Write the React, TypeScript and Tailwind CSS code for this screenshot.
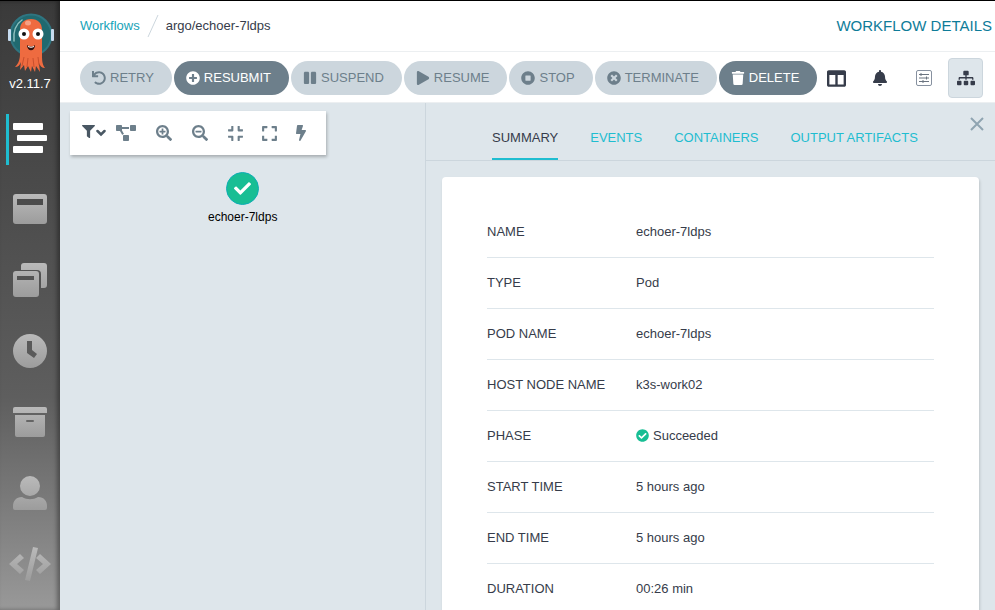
import type { ReactNode } from "react";
import {
  FaUndo, FaPlusCircle, FaPause, FaPlay, FaStopCircle, FaTimesCircle, FaTrash, FaColumns, FaBell, FaSitemap,
  FaFilter, FaProjectDiagram, FaSearchPlus, FaSearchMinus, FaCompress, FaExpand, FaBolt, FaCheck, FaCheckCircle,
} from "react-icons/fa";

function Logo() {
  return (
    <svg viewBox="0 0 48 64" className="h-16 w-12" aria-hidden="true">
      <circle cx="25" cy="24" r="21" fill="#20696f" />
      <circle cx="25" cy="24" r="20.500" fill="none" stroke="#2f7581" strokeWidth="2" />
      <path d="M8 30C7 20 10 13 16 9" fill="none" stroke="#8fc0bf" strokeWidth="1.500" strokeLinecap="round" />
      <rect x="2" y="18" width="3" height="12" rx="1" fill="#c7dcf0" />
      <rect x="45" y="18" width="3" height="12" rx="1" fill="#c7dcf0" />
      <path d="M14 19c0-7 4-11 11-11s11 4 11 11v23c0 7 0 11 3 15-3 0-5-2-6-5l1 9-4-6-1 6-3-6-1 6-3-6-3 5-1-6-4 5 1-8c-1 3-3 5-6 5 4-4 5-8 5-14z" fill="#ee6b40" />
      <path d="M18 46l-2 9M22 47l-1 9M27 47l1 9M32 46l1 8" stroke="#c94f2d" strokeWidth="1" />
      <ellipse cx="22" cy="12" rx="3" ry="2.500" fill="#f7a184" />
      <circle cx="18" cy="23" r="5.500" fill="#fff" />
      <circle cx="32" cy="23" r="5.500" fill="#fff" />
      <circle cx="18" cy="23" r="2" fill="#111" />
      <circle cx="32" cy="23" r="2" fill="#111" />
      <path d="M21 34c3 2 5 2 8 0 0 7-8 7-8 0z" fill="#31100d" />
      <path d="M22 35c2 1 4 1 6 0v1c-2 1-4 1-6 0z" fill="#fff" />
    </svg>
  );
}

function NavIcon({ children }: { children: ReactNode }) {
  return (
    <svg viewBox="0 0 44 36" className="h-9 w-11" fill="url(#nav-metal)" fillRule="evenodd" aria-hidden="true">
      {children}
    </svg>
  );
}

const navItems: { label: string; icon: ReactNode }[] = [
  { label: "Workflow templates", icon: <path d="M8 3h28a3 3 0 0 1 3 3v24a3 3 0 0 1-3 3H8a3 3 0 0 1-3-3V6a3 3 0 0 1 3-3zM9 8v6h26V8z" /> },
  { label: "Cluster workflow templates", icon: <path d="M16 1h20a3 3 0 0 1 3 3v19a3 3 0 0 1-3 3h-3V12a4 4 0 0 0-4-4H13V4a3 3 0 0 1 3-3zM8 9h20a3 3 0 0 1 3 3v20a3 3 0 0 1-3 3H8a3 3 0 0 1-3-3V12a3 3 0 0 1 3-3zM9 14v4h17v-4z" /> },
  { label: "Cron workflows", icon: <path d="M22 1a17 17 0 1 1 0 34 17 17 0 0 1 0-34zM19 8v12l7 5 3-4-5-4V8z" /> },
  { label: "Archived workflows", icon: <path d="M7 3h30a2 2 0 0 1 2 2v4H5V5a2 2 0 0 1 2-2zM7 11h30v20a2 2 0 0 1-2 2H9a2 2 0 0 1-2-2zM19 16a1 1 0 0 0 0 2h6a1 1 0 0 0 0-2z" /> },
  { label: "User", icon: <path d="M22 1a10 10 0 1 1 0 20 10 10 0 0 1 0-20zM14 22c5 3 11 3 16 0 6 0 9 4 9 9v2a2 2 0 0 1-2 2H7a2 2 0 0 1-2-2v-2c0-5 3-9 9-9z" /> },
  { label: "API docs", icon: <path d="M25 1l5 1-8 33-5-1zM12 8l4 4-7 6 7 6-4 4L1 18zM32 8l11 10-11 10-4-4 7-6-7-6z" /> },
];

function Sidebar() {
  return (
    <nav className="z-10 flex w-[60px] shrink-0 flex-col items-center bg-linear-to-b from-[#3a3a3a] via-[#5e5e5e] via-65% to-[#999] shadow-[inset_-3px_0_4px_rgba(0,0,0,0.35)]" aria-label="Main">
      <svg className="absolute size-0" aria-hidden="true">
        <linearGradient id="nav-metal" x1="0" y1="0" x2="0" y2="1">
          <stop offset="0" stopColor="#bababa" />
          <stop offset="1" stopColor="#9c9c9c" />
        </linearGradient>
      </svg>
      <div className="flex h-[102px] w-full shrink-0 flex-col items-center pt-[10px] text-[13px] leading-[18px] text-white">
        <Logo />
        v2.11.7
      </div>
      <a href="#workflows" aria-label="Workflows" className="flex h-[70px] w-full shrink-0 items-start pt-[11px] pl-[6px]">
        <span className="flex h-[51px] items-center border-l-[3px] border-[#1fbdd0] pb-[3px] pl-1">
          <svg viewBox="0 0 34 32" className="h-8 w-[34px]" fill="#fff" aria-hidden="true">
            <rect x="0" y="1" width="30" height="7" rx="1" />
            <rect x="4" y="13" width="30" height="6" rx="1" />
            <rect x="0" y="24" width="30" height="7" rx="1" />
          </svg>
        </span>
      </a>
      {navItems.map(({ label, icon }) => (
        <a key={label} href="#nav" aria-label={label} className="flex h-[71px] w-full shrink-0 items-center justify-center">
          <NavIcon>{icon}</NavIcon>
        </a>
      ))}
    </nav>
  );
}

const actions = [
  { label: "RETRY", icon: <FaUndo />, active: false },
  { label: "RESUBMIT", icon: <FaPlusCircle />, active: true },
  { label: "SUSPEND", icon: <FaPause />, active: false },
  { label: "RESUME", icon: <FaPlay />, active: false },
  { label: "STOP", icon: <FaStopCircle />, active: false },
  { label: "TERMINATE", icon: <FaTimesCircle />, active: false },
  { label: "DELETE", icon: <FaTrash />, active: true },
];

function ActionBar() {
  return (
    <div className="flex h-[51px] items-center border-b border-[#eceff1] bg-white pt-[2px] pr-3 pl-5">
      <div className="flex gap-[2px]">
        {actions.map(({ label, icon, active }) => (
          <button
            key={label}
            type="button"
            className={`flex h-[34px] items-center gap-1 rounded-full pr-[18px] pl-3 text-[13px] ${active ? "bg-[#6d7f8b] text-white" : "bg-[#ccd6dd] text-[#6d7f8b]"}`}
          >
            <span className="text-[14px]">{icon}</span>
            {label}
          </button>
        ))}
      </div>
      <div className="ml-auto flex items-center gap-3 text-[#363c4a]">
        <button type="button" aria-label="Summary view" className="flex h-10 w-8 items-center justify-center"><FaColumns size={19} /></button>
        <button type="button" aria-label="Events" className="flex h-10 w-8 items-center justify-center"><FaBell size={16} /></button>
        <button type="button" aria-label="Timeline" className="flex h-10 w-8 items-center justify-center">
          <svg viewBox="0 0 16 16" className="size-4" fill="none" stroke="#6b7480" aria-hidden="true">
            <rect x="0.500" y="0.500" width="15" height="15" rx="1.500" stroke="#8791a0" />
            <path d="M3 4.500h10M3 8h10M3 11.500h10M5 3v3M10.500 6.500v3M7 10v3" />
          </svg>
        </button>
        <button type="button" aria-label="Graph" aria-pressed="true" className="-ml-1 flex h-10 w-[35px] items-center justify-center rounded-sm border border-[#ccd6dd] bg-[#dee6eb]"><FaSitemap size={18} /></button>
      </div>
    </div>
  );
}

function GraphTool({ label, width, children }: { label: string; width: string; children: ReactNode }) {
  return <button type="button" aria-label={label} className={`flex h-full items-center justify-center ${width}`}>{children}</button>;
}

function Graph() {
  return (
    <section className="relative w-[365px] shrink-0 pt-2 pl-[10px]" aria-label="Workflow graph">
      <div className="flex h-11 w-64 items-center bg-white pl-2 text-[16px] text-[#6d7f8b] shadow-[1px_2px_3px_rgba(0,0,0,0.25)]">
        <button type="button" aria-label="Filter nodes" className="flex h-full w-8 items-center justify-center gap-px pb-1 text-[#495763]">
          <FaFilter size={13} />
          <svg viewBox="0 0 10 8" className="mt-1 h-2 w-[10px]" fill="none" stroke="currentColor" strokeWidth="2.500" strokeLinecap="round" aria-hidden="true"><path d="M1.500 2L5 5.500L8.500 2" /></svg>
        </button>
        <GraphTool label="Change layout" width="w-9 pr-1"><FaProjectDiagram size={20} /></GraphTool>
        <GraphTool label="Zoom in" width="w-9"><FaSearchPlus /></GraphTool>
        <GraphTool label="Zoom out" width="w-9"><FaSearchMinus /></GraphTool>
        <GraphTool label="Collapse all" width="w-[34px]"><FaCompress size={17} /></GraphTool>
        <GraphTool label="Expand all" width="w-[34px]"><FaExpand size={17} /></GraphTool>
        <GraphTool label="Fast render" width="w-[30px]"><FaBolt /></GraphTool>
      </div>
      <button type="button" className="absolute top-[69px] left-[148px] flex flex-col items-center gap-1 text-[12px] leading-4 text-black">
        <span className="flex size-[33px] items-center justify-center rounded-full border border-[#0dadb5] bg-[#18be94] text-white"><FaCheck size={17} /></span>
        echoer-7ldps
      </button>
    </section>
  );
}

const rows: [string, string][] = [
  ["NAME", "echoer-7ldps"],
  ["TYPE", "Pod"],
  ["POD NAME", "echoer-7ldps"],
  ["HOST NODE NAME", "k3s-work02"],
  ["PHASE", "Succeeded"],
  ["START TIME", "5 hours ago"],
  ["END TIME", "5 hours ago"],
  ["DURATION", "00:26 min"],
];

function Details() {
  return (
    <section className="min-w-0 flex-1 border-l border-[#ccd6dd]" aria-label="Node details">
      <div className="flex h-[58px] items-end justify-between border-b border-[#ccd6dd] pr-[10px] pl-[66px]">
        <div role="tablist" className="flex gap-8 text-[13px] leading-5 whitespace-nowrap text-[#1fbdd0]">
          <button type="button" role="tab" aria-selected="true" className="border-b-2 border-[#1fbdd0] pb-[10px] text-[#363c4a]">SUMMARY</button>
          <button type="button" role="tab" aria-selected="false" className="border-b-2 border-transparent pb-[10px]">EVENTS</button>
          <button type="button" role="tab" aria-selected="false" className="border-b-2 border-transparent pb-[10px]">CONTAINERS</button>
          <button type="button" role="tab" aria-selected="false" className="border-b-2 border-transparent pb-[10px]">OUTPUT ARTIFACTS</button>
        </div>
        <button type="button" aria-label="Close" className="self-start pt-[13px]">
          <svg viewBox="0 0 16 16" className="size-4" stroke="#8fa4b1" strokeWidth="2" aria-hidden="true"><path d="M2 2l12 12M14 2L2 14" /></svg>
        </button>
      </div>
      <div className="m-4 rounded-sm bg-white px-[45px] pt-[29px] pb-8 shadow-[1px_2px_3px_rgba(0,0,0,0.15)]">
        <table className="w-full table-fixed text-left text-[13px] text-[#363c4a]">
          <tbody>
            {rows.map(([label, value]) => (
              <tr key={label} className="h-[51px] border-b border-[#dee6eb]">
                <th scope="row" className="w-1/3 p-0 font-normal">{label}</th>
                <td className="p-0">
                  <span className="flex items-center gap-1">
                    {label === "PHASE" && <FaCheckCircle className="text-[#18be94]" />}
                    {value}
                  </span>
                </td>
              </tr>
            ))}
          </tbody>
        </table>
      </div>
    </section>
  );
}

export default function App() {
  return (
    <div className="flex h-screen overflow-hidden border-t border-black bg-[#dee6eb] font-['Liberation_Sans',Arial,sans-serif]">
      <Sidebar />
      <div className="flex min-w-0 flex-1 flex-col">
        <header className="flex h-[51px] shrink-0 items-center justify-between border-b border-[#eceff1] bg-white pr-[3px] pl-5">
          <div className="flex items-center text-[13px] text-[#363c4a]">
            <a href="#workflows" className="text-[#17a3b8]">Workflows</a>
            <svg viewBox="0 0 12 22" className="mx-[7px] h-[22px] w-3" stroke="#ccd6dd" aria-hidden="true"><path d="M1 22L11 0" /></svg>
            argo/echoer-7ldps
          </div>
          <h1 className="text-[15px] text-[#0e7c99]">WORKFLOW DETAILS</h1>
        </header>
        <ActionBar />
        <main className="flex min-h-0 flex-1">
          <Graph />
          <Details />
        </main>
      </div>
    </div>
  );
}
